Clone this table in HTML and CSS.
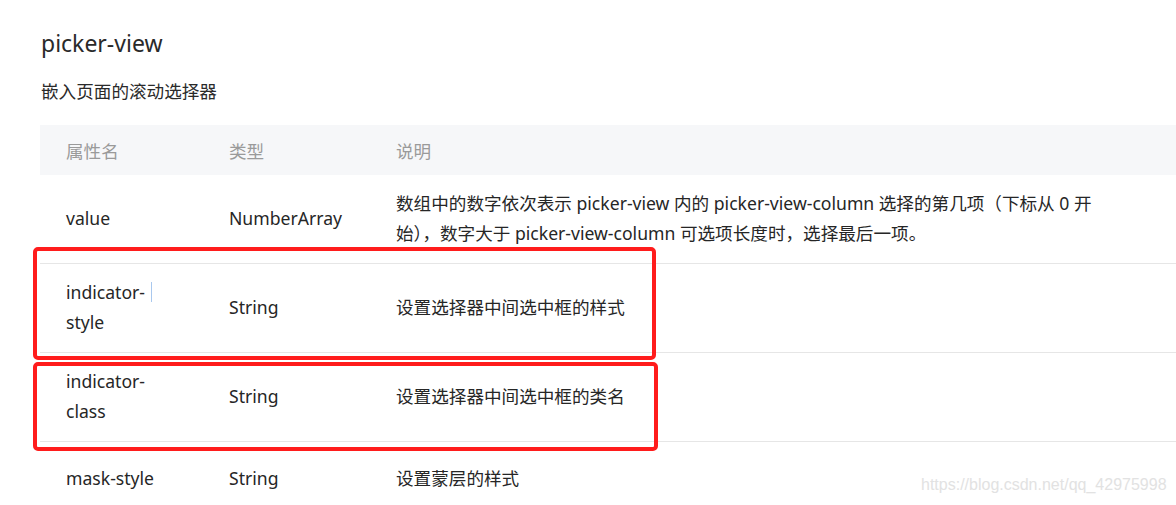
FILE: index.html
```html
<!DOCTYPE html>
<html>
    <head>
        <meta charset="utf-8">
        <title>picker-view</title>
        <link rel="stylesheet" href="styles.css">
    </head>
    <body>
        <div class="doc">
            <h2 class="title">picker-view</h2>
            <p class="lead">嵌入页面的滚动选择器</p>

            <div class="props">
                <table class="attrs" cellspacing="0" cellpadding="0">
                    <colgroup>
                        <col class="col-name">
                        <col class="col-type">
                        <col class="col-desc">
                    </colgroup>
                    <tr class="head"><th>属性名</th><th>类型</th><th>说明</th></tr>
                    <tr>
                        <td>value</td>
                        <td>NumberArray</td>
                        <td><div class="desc">数组中的数字依次表示 picker-view 内的 picker-view-column 选择的第几项（下标从 0 开始），数字大于 picker-view-column 可选项长度时，选择最后一项。</div></td>
                    </tr>
                    <tr>
                        <td>indicator-<span class="caret"></span>style</td>
                        <td>String</td>
                        <td><div class="desc">设置选择器中间选中框的样式</div></td>
                    </tr>
                    <tr>
                        <td>indicator-class</td>
                        <td>String</td>
                        <td><div class="desc">设置选择器中间选中框的类名</div></td>
                    </tr>
                    <tr class="last">
                        <td>mask-style</td>
                        <td>String</td>
                        <td><div class="desc">设置蒙层的样式</div></td>
                    </tr>
                </table>

                <!-- red annotation boxes drawn over the screenshot -->
                <div class="mark mark-1"></div>
                <div class="mark mark-2"></div>
            </div>
        </div>
        <div class="watermark">https://blog.csdn.net/qq_42975998</div>
    </body>
</html>
```

FILE: styles.css
```css
html, body {
    margin: 0;
    padding: 0;
    background-color: white;
    overflow: hidden;
}

body {
    font-family: "Noto Sans", "Noto Sans CJK SC", sans-serif;
    font-size: 17.6px;
    color: #262626;
}

div.doc {
    padding-left: 40px;
}

h2.title {
    margin: 26px 0 0 1px;
    font-size: 23px;
    font-weight: normal;
    line-height: 34px;
    color: #2a2a2a;
}

p.lead {
    margin: 16px 0 0 1px;
    line-height: 30px;
    color: #2a2a2a;
}

div.props {
    position: relative;
    margin-top: 19px;
}

table.attrs {
    width: 1136px;
    table-layout: fixed;
    border-collapse: collapse;
}

col.col-name {
    width: 163px;
}

col.col-type {
    width: 167px;
}

table.attrs th {
    height: 50px;
    padding: 0 26px;
    background-color: #f6f7f9;
    color: #9a9a9a;
    font-weight: normal;
    text-align: left;
    vertical-align: middle;
}

table.attrs td {
    padding: 14px 26px 15px;
    border-bottom: 1px solid #e6e6e6;
    line-height: 29.5px;
    text-align: left;
    vertical-align: middle;
    white-space: normal;
}

table.attrs tr.last td {
    padding-top: 22px;
    border-bottom: none;
}

div.desc {
    max-width: 730px;
}

span.caret {
    display: inline-block;
    width: 1px;
    height: 20px;
    margin-left: 6px;
    vertical-align: -3px;
    background-color: #a9c8ee;
}

div.mark {
    position: absolute;
    border: 4px solid #ff1c1c;
    border-radius: 5px;
}

div.mark-1 {
    left: -7px;
    top: 122px;
    width: 615px;
    height: 105px;
}

div.mark-2 {
    left: -7px;
    top: 237px;
    width: 617px;
    height: 81px;
}

div.watermark {
    position: absolute;
    left: 921px;
    top: 476px;
    font-family: "Liberation Sans", Arial, sans-serif;
    font-size: 16px;
    color: #e2e2e2;
}
```
